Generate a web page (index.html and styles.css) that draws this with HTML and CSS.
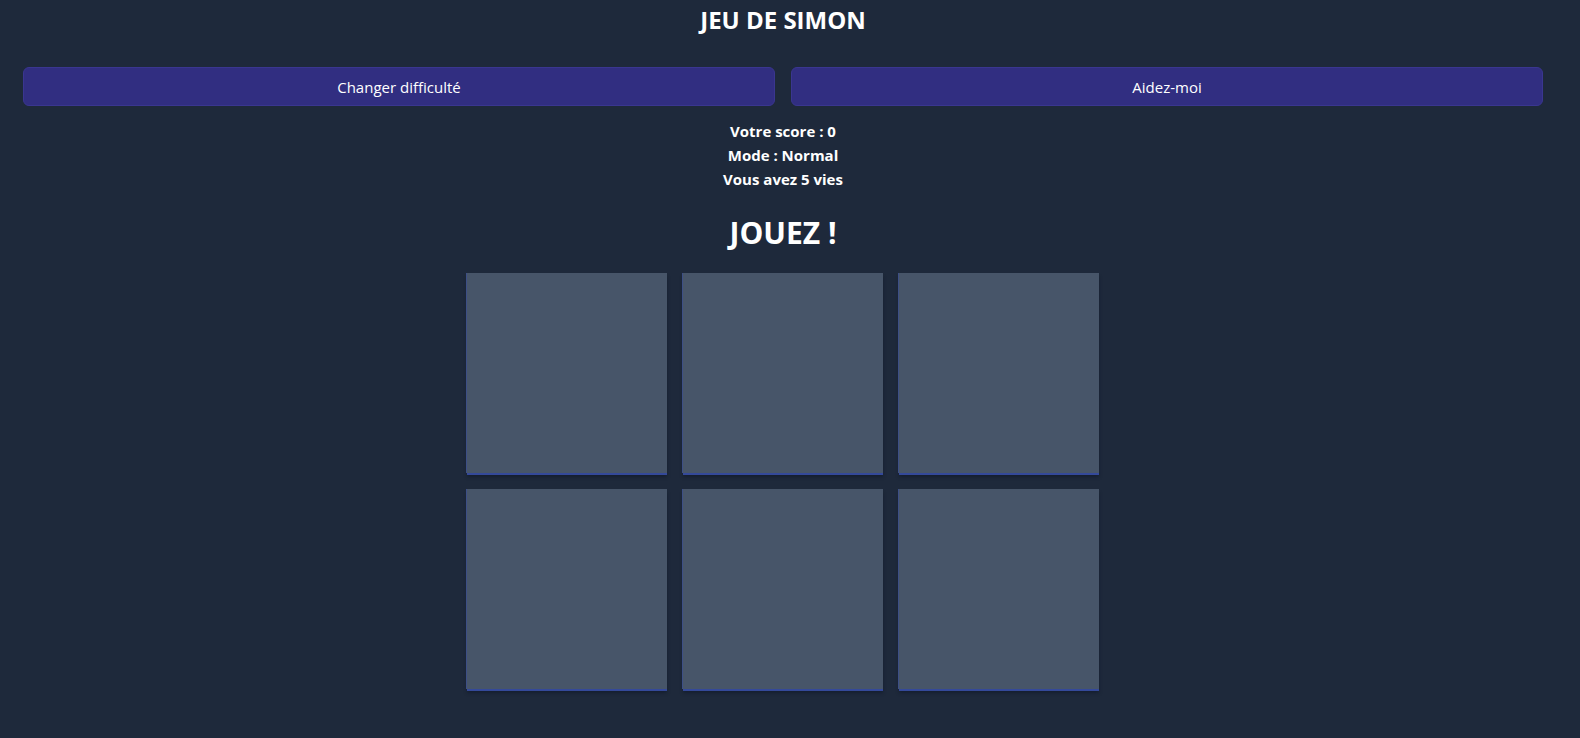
FILE: index.html
```html
<!DOCTYPE html>
<html lang="fr">
<head>
<meta charset="utf-8">
<title>Jeu de Simon</title>
<link rel="stylesheet" href="styles.css">
</head>
<body>
<main class="page">
  <h1 class="title">JEU DE SIMON</h1>
  <div class="actions">
    <button class="btn">Changer difficulté</button>
    <button class="btn">Aidez-moi</button>
  </div>
  <div class="stats">
    <p>Votre score : 0</p>
    <p>Mode : Normal</p>
    <p>Vous avez 5 vies</p>
  </div>
  <h2 class="play">JOUEZ !</h2>
  <div class="board">
    <div class="tile"></div>
    <div class="tile"></div>
    <div class="tile"></div>
    <div class="tile"></div>
    <div class="tile"></div>
    <div class="tile"></div>
  </div>
</main>
</body>
</html>
```
FILE: styles.css
```css
html, body {
  margin: 0;
  padding: 0;
  background: #1e293b;
  color: #ffffff;
  font-family: "Open Sans", "Noto Sans", Arial, sans-serif;
}

.page {
  padding: 4px 37px 40px 23px;
  display: flex;
  flex-direction: column;
  align-items: center;
}

.title {
  margin: 0;
  font-size: 24px;
  line-height: 32px;
  font-weight: 700;
  text-align: center;
}

.actions {
  align-self: stretch;
  display: grid;
  grid-template-columns: 1fr 1fr;
  gap: 16px;
  margin-top: 31px;
}

.btn {
  height: 39px;
  border: 1px solid #3a3690;
  border-radius: 6px;
  background: #312e81;
  color: #ffffff;
  font-family: inherit;
  font-size: 15px;
  padding: 1px 0 0;
}

.stats {
  margin-top: 13px;
  text-align: center;
  font-weight: 700;
  font-size: 15px;
  line-height: 24px;
}

.stats p {
  margin: 0;
}

.play {
  margin: 24px 0 0;
  font-size: 30px;
  line-height: 36px;
  font-weight: 700;
}

.board {
  margin-top: 22px;
  display: grid;
  grid-template-columns: repeat(3, 200px);
  grid-auto-rows: 200px;
  gap: 16px;
}

.tile {
  background: #475569;
  box-shadow: -1px 0 0 #3d4f86, 0 2px 0 #34499a, 0 4px 3px rgba(15, 23, 42, 0.6);
}
```
